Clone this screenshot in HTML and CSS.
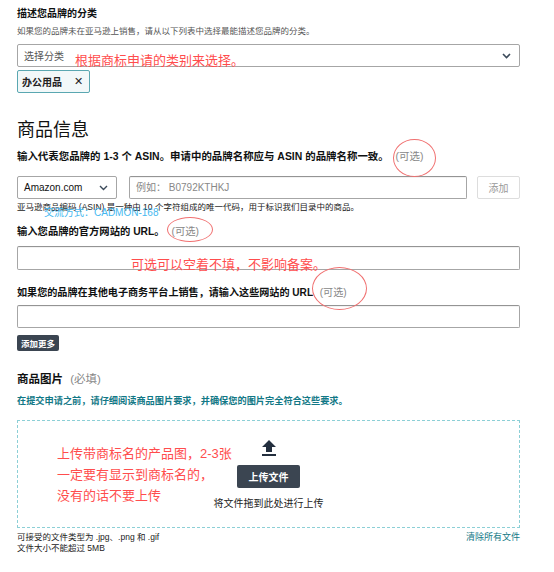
FILE: index.html
```html
<!DOCTYPE html>
<html lang="zh-CN">
<head>
  <meta charset="UTF-8">
  <title>品牌注册</title>
  <link rel="stylesheet" href="styles.css">
</head>
<body>
  <div class="page">
    <h3 class="field-title">描述您品牌的分类</h3>
    <p class="hint">如果您的品牌未在亚马逊上销售，请从以下列表中选择最能描述您品牌的分类。</p>
    <div class="select wide">
      <span class="placeholder">选择分类</span>
      <svg class="chevron" width="9" height="6" viewBox="0 0 9 6"><path d="M1 1l3.5 3.5L8 1" fill="none" stroke="#3b4a5a" stroke-width="1.6"/></svg>
    </div>
    <div class="chip">办公用品 <span class="chip-x">✕</span></div>

    <h2 class="section-title">商品信息</h2>
    <h3 class="field-title gap-asin">输入代表您品牌的 1-3 个 ASIN。申请中的品牌名称应与 ASIN 的品牌名称一致。 <span class="optional">(可选)</span></h3>
    <div class="asin-row">
      <div class="select market">
        <span>Amazon.com</span>
        <svg class="chevron" width="9" height="6" viewBox="0 0 9 6"><path d="M1 1l3.5 3.5L8 1" fill="none" stroke="#3b4a5a" stroke-width="1.4"/></svg>
      </div>
      <div class="input asin-input">例如：&nbsp;B0792KTHKJ</div>
      <button class="btn-light">添加</button>
    </div>
    <p class="hint small">亚马逊商品编码 (ASIN) 是一种由 10 个字符组成的唯一代码，用于标识我们目录中的商品。</p>

    <h3 class="field-title gap-url">输入您品牌的官方网站的 URL。 <span class="optional">(可选)</span></h3>
    <div class="input url-input"></div>

    <h3 class="field-title gap-other">如果您的品牌在其他电子商务平台上销售，请输入这些网站的 URL <span class="optional">(可选)</span></h3>
    <div class="input other-input"></div>
    <button class="btn-dark">添加更多</button>

    <h3 class="field-title images-title">商品图片 <span class="optional">(必填)</span></h3>
    <p class="notice">在提交申请之前，请仔细阅读商品图片要求，并确保您的图片完全符合这些要求。</p>
    <div class="dropzone">
      <svg class="upload-icon" width="14" height="16" viewBox="0 0 14 16"><path d="M7 0L0 7h4v5h6V7h4z" fill="#232f3e"/><rect x="0" y="14" width="14" height="2" fill="#232f3e"/></svg>
      <button class="btn-upload">上传文件</button>
      <p class="drop-text">将文件拖到此处进行上传</p>
    </div>
    <div class="file-footer">
      <div>
        <p>可接受的文件类型为 .jpg、.png 和 .gif</p>
        <p>文件大小不能超过 5MB</p>
      </div>
      <a class="clear-link">清除所有文件</a>
    </div>
  </div>

  <div class="note note-category">根据商标申请的类别来选择。</div>
  <div class="note note-contact">交流方式：CADMON-168</div>
  <div class="note note-optional">可选可以空着不填，不影响备案。</div>
  <div class="note note-upload">上传带商标名的产品图，2-3张<br>一定要有显示到商标名的，<br>没有的话不要上传</div>
  <div class="ring ring-asin"></div>
  <div class="ring ring-url"></div>
  <div class="ring ring-other"></div>
</body>
</html>
```

FILE: styles.css
```css
* {
  margin: 0;
  padding: 0;
  box-sizing: border-box;
}

body {
  font-family: "Liberation Sans", "Noto Sans CJK SC", sans-serif;
  color: #111;
  background: #fff;
  position: relative;
  width: 554px;
  height: 572px;
  overflow: hidden;
}

.page {
  width: 503px;
  margin-left: 17px;
  padding-top: 6px;
}

.field-title {
  font-size: 10px;
  line-height: 16px;
  font-weight: bold;
  color: #0f1111;
}

.optional {
  font-weight: normal;
  color: #888;
  margin-left: 4px;
}

.hint {
  font-size: 8.5px;
  line-height: 14px;
  color: #555;
  margin-top: 2px;
}

.hint.small {
  color: #222;
  line-height: 12px;
  margin-top: 2px;
}

.select {
  display: flex;
  align-items: center;
  justify-content: space-between;
  border: 1px solid #a6a6a6;
  border-radius: 2px;
  background: #fff;
  font-size: 10px;
  color: #333;
  padding: 0 8px 0 6px;
}

.select.wide {
  height: 23px;
  margin-top: 6px;
}

.placeholder {
  color: #555;
}

.chip {
  display: inline-flex;
  align-items: center;
  height: 23px;
  margin-top: 3px;
  padding: 0 6px 0 4px;
  border: 1px solid #5aa7b1;
  border-radius: 2px;
  background: #f2f8f9;
  font-size: 10px;
  font-weight: bold;
  color: #222;
}

.chip-x {
  margin-left: 12px;
  font-size: 11px;
  font-weight: normal;
}

.section-title {
  font-size: 18px;
  line-height: 24px;
  font-weight: normal;
  margin-top: 25px;
  color: #111;
}

.gap-asin {
  font-size: 10.45px;
  margin-top: 7px;
}

.asin-row {
  display: flex;
  align-items: center;
  height: 23px;
  margin-top: 11px;
}

.select.market {
  width: 100px;
  height: 23px;
  font-size: 10px;
  color: #111;
}

.input {
  border: 1px solid #a6a6a6;
  border-top-color: #949494;
  border-radius: 2px;
  background: #fff;
  box-shadow: inset 0 1px 0 rgba(0, 0, 0, 0.05);
}

.asin-input {
  width: 338px;
  height: 23px;
  margin-left: 12px;
  font-size: 10px;
  line-height: 21px;
  color: #888;
  padding-left: 6px;
}

.btn-light {
  width: 43px;
  height: 23px;
  margin-left: 10px;
  border: 1px solid #ddd;
  border-radius: 2px;
  background: #fff;
  color: #999;
  font-family: inherit;
  font-size: 10px;
}

.gap-url {
  font-size: 10.3px;
  margin-top: 11px;
}

.url-input {
  height: 24px;
  margin-top: 6px;
}

.gap-other {
  font-size: 10.1px;
  margin-top: 15px;
}

.other-input {
  height: 23px;
  margin-top: 4px;
}

.btn-dark {
  display: block;
  height: 16px;
  margin-top: 7px;
  padding: 0 4px;
  border: none;
  border-radius: 2px;
  background: #3b4551;
  color: #fff;
  font-family: inherit;
  font-size: 8.5px;
  font-weight: bold;
}

.images-title {
  font-size: 11.5px;
  margin-top: 20px;
}

.notice {
  font-size: 9.2px;
  line-height: 14px;
  font-weight: bold;
  color: #127886;
  margin-top: 7px;
}

.dropzone {
  display: flex;
  flex-direction: column;
  align-items: center;
  height: 108px;
  margin-top: 12px;
  padding-top: 19px;
  border: 1px dashed #8ccfd6;
}

.btn-upload {
  width: 63px;
  height: 23px;
  margin-top: 9px;
  border: none;
  border-radius: 2px;
  background: #3b4551;
  color: #fff;
  font-family: inherit;
  font-size: 10px;
  font-weight: bold;
}

.drop-text {
  font-size: 10px;
  line-height: 14px;
  margin-top: 9px;
  color: #222;
}

.file-footer {
  display: flex;
  justify-content: space-between;
  margin-top: 4px;
  font-size: 8.5px;
  line-height: 11px;
  color: #222;
}

.clear-link {
  color: #127886;
  font-size: 9px;
}

.note {
  position: absolute;
  color: #ff4d4d;
  font-size: 13px;
  line-height: 16px;
  white-space: nowrap;
}

.note-category {
  left: 75px;
  top: 53px;
}

.note-contact {
  left: 44px;
  top: 206px;
  font-size: 10px;
  line-height: 14px;
  color: #45b8f0;
}

.note-optional {
  left: 131px;
  top: 257px;
}

.note-upload {
  left: 57px;
  top: 443px;
  line-height: 21px;
}

.ring {
  position: absolute;
  border: 1px solid #f07070;
  border-radius: 50%;
}

.ring-asin {
  left: 393px;
  top: 139px;
  width: 43px;
  height: 38px;
}

.ring-url {
  left: 167px;
  top: 217px;
  width: 46px;
  height: 25px;
}

.ring-other {
  left: 312px;
  top: 267px;
  width: 55px;
  height: 43px;
}
```
